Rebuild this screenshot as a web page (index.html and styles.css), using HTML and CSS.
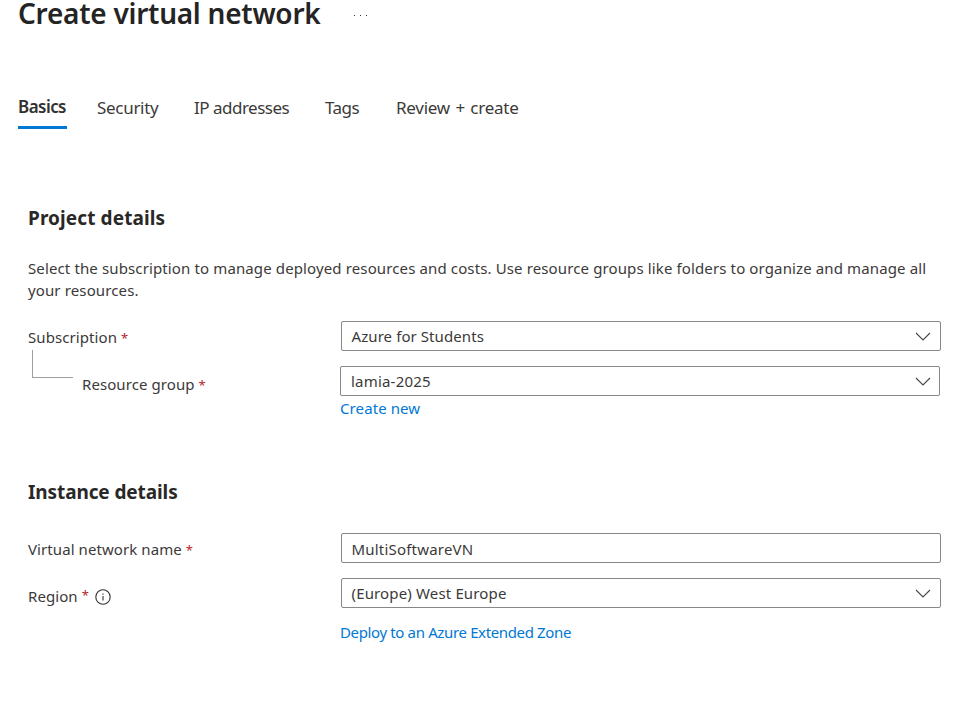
FILE: index.html
```html
<!DOCTYPE html>
<html lang="en">
<head>
<meta charset="utf-8">
<title>Create virtual network</title>
<link rel="stylesheet" href="styles.css">
</head>
<body>
<header class="header"><h1 class="title">Create virtual network</h1><span class="more"><i></i><i></i><i></i></span></header>
<nav class="tabs">
<a class="tab active">Basics</a><a class="tab security">Security</a><a class="tab ip">IP addresses</a><a class="tab tags">Tags</a><a class="tab review">Review + create</a>
</nav>
<main class="content">
<h2 class="heading project">Project details</h2>
<p class="intro">Select the subscription to manage deployed resources and costs. Use resource groups like folders to organize and manage all<br>your resources.</p>
<div class="row subscription"><label class="label"><span>Subscription</span> <b>*</b></label><div class="field"><span class="v-sub">Azure for Students</span><svg class="chevron" viewBox="0 0 16 9"><path d="M1 1 8 8 15 1"/></svg></div></div>
<div class="row group"><span class="branch"></span><label class="label"><span>Resource group</span> <b>*</b></label><div class="field"><span class="v-group">lamia-2025</span><svg class="chevron" viewBox="0 0 16 9"><path d="M1 1 8 8 15 1"/></svg></div></div>
<a class="link create">Create new</a>
<h2 class="heading instance">Instance details</h2>
<div class="row name"><label class="label"><span>Virtual network name</span> <b>*</b></label><div class="field"><span class="v-name">MultiSoftwareVN</span></div></div>
<div class="row region"><label class="label"><span>Region</span> <b>*</b><svg class="info" viewBox="0 0 16 16"><circle cx="8" cy="8" r="7.2"/><path d="M8 7v4.5M8 4.5v1.2"/></svg></label><div class="field"><span class="v-region">(Europe) West Europe</span><svg class="chevron" viewBox="0 0 16 9"><path d="M1 1 8 8 15 1"/></svg></div></div>
<a class="link deploy">Deploy to an Azure Extended Zone</a>
</main>
</body>
</html>
```
FILE: styles.css
```css
*{box-sizing:border-box}
body{margin:0;width:965px;height:728px;overflow:hidden;background:#fff;color:#3b3a39;font:15px/22px "Noto Sans",sans-serif}
h1,h2,p{margin:0}
.header{display:flex;height:32px;padding-left:18px}
.title{width:335px;font-size:28px;line-height:27px;font-weight:600;letter-spacing:-.26px;white-space:nowrap;color:#242424}
.more{display:flex;gap:4.5px;padding:14.5px 0 0 .5px}
.more i{width:1.5px;height:1.5px;background:#333}
.tabs{display:flex;height:97px;padding:62px 0 0 18px;font-size:17px;line-height:28px}
.tab{white-space:nowrap;height:35px}
.active{width:49px;border-bottom:3px solid #0078d4;font-weight:600;line-height:26px;letter-spacing:-.55px;color:#323130}
.security{margin-left:30px;width:97px;letter-spacing:-.3px}
.ip{width:131px;letter-spacing:-.5px}
.tags{width:71px;letter-spacing:-.55px}
.review{letter-spacing:-.25px;word-spacing:1.3px}
.content{padding-left:28px}
.heading{font-size:19px;line-height:28px;font-weight:700;color:#292827}
.project{margin-top:75px;letter-spacing:.1px}
.intro{margin-top:25px;height:64px;white-space:nowrap;letter-spacing:.125px}
.row{display:flex;width:913px;height:30px}
.label{width:313px;white-space:nowrap;line-height:32px;letter-spacing:.08px}
.label b{color:#b4262c;font-weight:400;font-size:13px}
.field{display:flex;align-items:center;justify-content:space-between;width:600px;height:30px;padding:0 9px 0 9.5px;border:1px solid #8a8886;border-radius:2px}
.chevron{width:16px;height:9px;margin-top:1px;fill:none;stroke:#484644;stroke-width:1.1}
.group{margin-top:15px;width:912px}
.group .field{padding:0 8px 0 10px}
.branch{width:41px;height:28px;margin:-16px 9px 0 4px;border:solid #a19f9d;border-width:0 0 1px 1px}
.group .label{width:258px;line-height:36px}
.v-sub{letter-spacing:.08px}
.v-group{letter-spacing:.2px}
.v-name{letter-spacing:.2px;padding-top:2px}
.v-region{letter-spacing:.15px}
.link{display:block;width:max-content;margin-left:312px;color:#0078d4;white-space:nowrap}
.create{margin-top:1px;letter-spacing:.1px}
.instance{margin-top:59px;letter-spacing:-.1px}
.name{margin-top:27px}
.region{margin-top:15px}
.region .label{display:flex;gap:4px;line-height:36px}
.region .label b{line-height:35px}
.info{width:16px;height:16px;margin:11px 0 0 2px;fill:none;stroke:#323130;stroke-width:1.1}
.deploy{margin-top:13px;letter-spacing:-.36px}
```
